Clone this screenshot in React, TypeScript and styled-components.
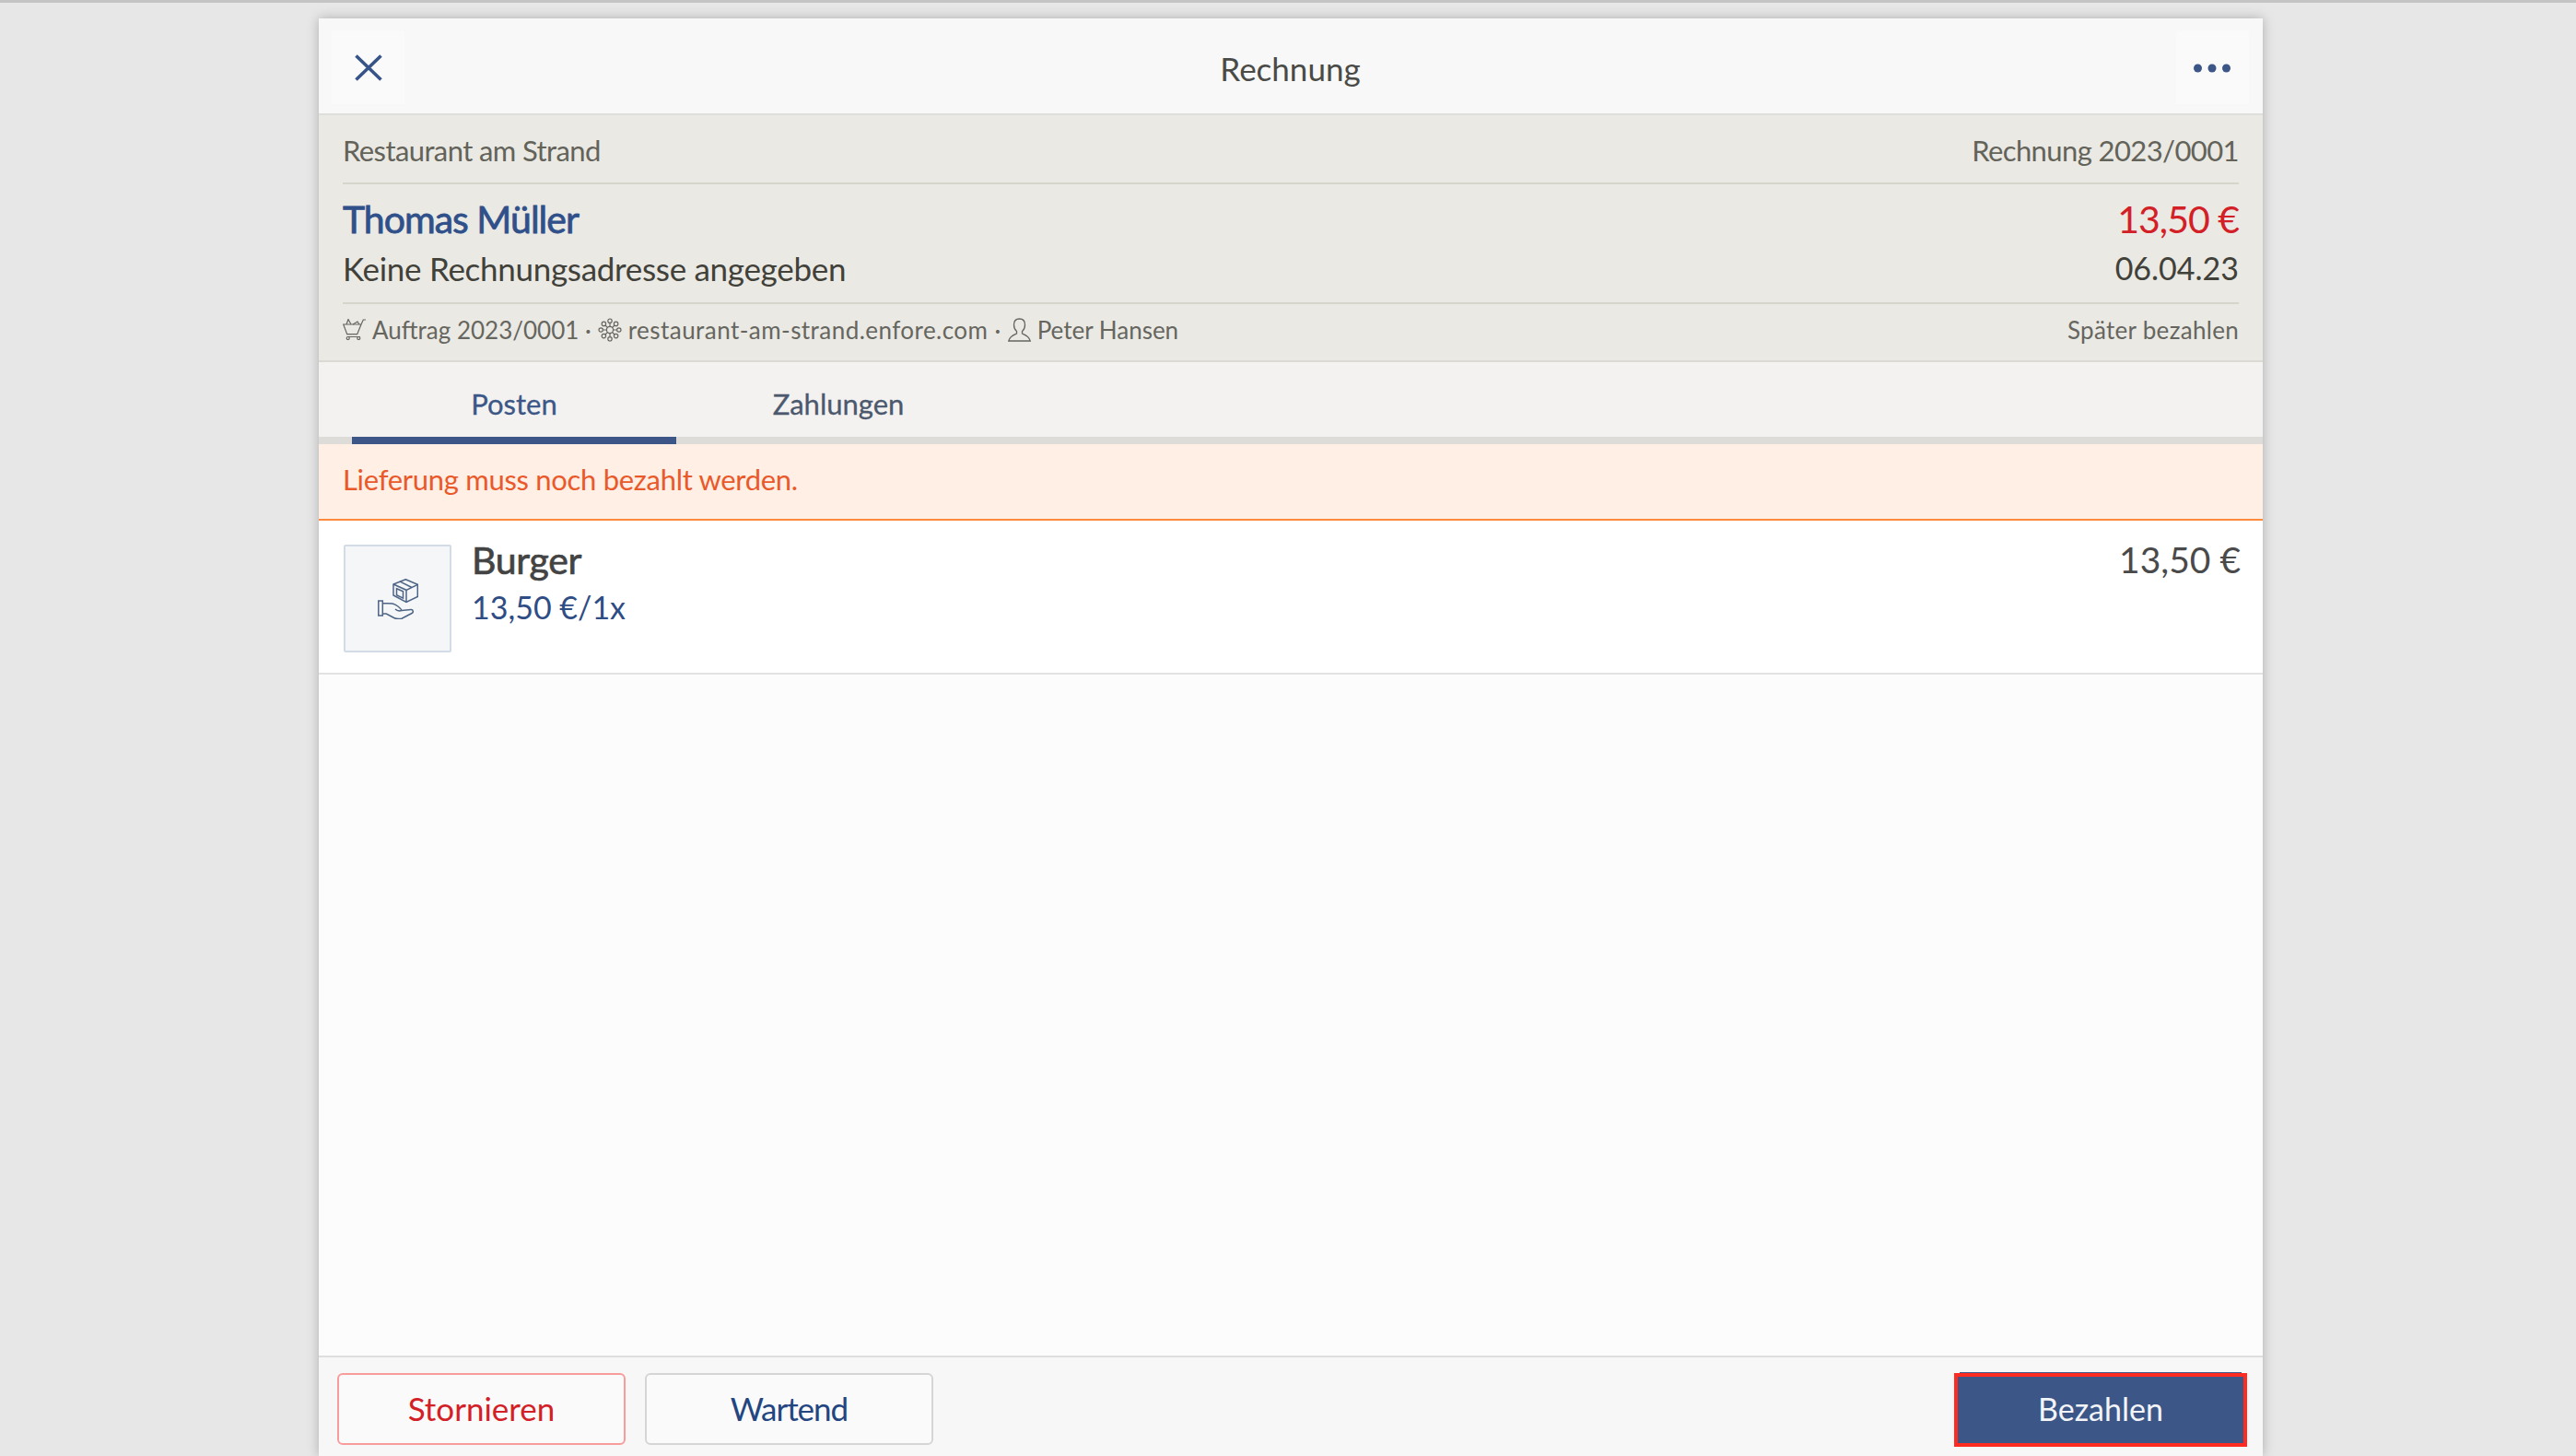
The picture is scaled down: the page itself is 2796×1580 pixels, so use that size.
import React from 'react';
import styled, { createGlobalStyle } from 'styled-components';

const FONT = `"Lato", "Noto Sans", sans-serif`;

const GlobalStyle = createGlobalStyle`
  html, body { margin: 0; padding: 0; height: 100%; background: #e7e7e7; overflow: hidden; }
  #root { height: 100%; }
  * { box-sizing: border-box; }
  body { font-family: ${FONT}; }
`;

const Screen = styled.div`
  height: 1580px;
  border-top: 3px solid #c4c4c4;
  padding: 17px 0 0 346px;
  display: flex;
`;

const Panel = styled.div`
  width: 2110px;
  height: 1560px;
  flex: none;
  display: flex;
  flex-direction: column;
  background: #fcfcfc;
  box-shadow: 0 0 12px rgba(0, 0, 0, 0.25);
`;

const TopBar = styled.header`
  height: 105px;
  flex: none;
  padding: 14px 15px 10px 14px;
  display: flex;
  align-items: flex-start;
  justify-content: space-between;
  background: #f8f8f8;
  border-bottom: 2px solid #dededc;
`;

const IconButton = styled.button`
  width: 79px;
  height: 79px;
  padding: 0;
  border: 0;
  display: flex;
  align-items: center;
  justify-content: center;
  background: #fafafa;
`;

const Title = styled.h1`
  margin: 0;
  padding-top: 17px;
  font-size: 35px;
  line-height: 46px;
  font-weight: 400;
  color: #4a4a46;
`;

const Summary = styled.section`
  flex: none;
  height: 268px;
  padding: 0 26px;
  background: #eae9e4;
  border-bottom: 2px solid #dbdad2;
`;

const SummaryRow = styled.div<{ $height: number; $divider?: boolean; $pad: string }>`
  height: ${({ $height }) => $height}px;
  padding: ${({ $pad }) => $pad};
  display: flex;
  justify-content: space-between;
  align-items: center;
  border-bottom: ${({ $divider }) => ($divider ? '2px solid #d6d5cb' : '0')};
`;

const StackedRow = styled.div`
  height: 130px;
  padding-top: 11px;
  display: grid;
  grid-template-columns: 1fr auto;
  grid-auto-rows: 53px;
  align-items: center;
  border-bottom: 2px solid #d6d5cb;
`;

const MutedText = styled.span`
  font-size: 31px;
  letter-spacing: -0.6px;
  color: #63635a;
`;

const Customer = styled.span`
  font-size: 41px;
  letter-spacing: -1px;
  color: #30508a;
  -webkit-text-stroke: 0.8px #30508a;
`;

const Amount = styled.span`
  font-size: 41px;
  letter-spacing: -1px;
  color: #d32026;
  text-align: right;
`;

const AddressText = styled.span`
  font-size: 35px;
  letter-spacing: -0.3px;
  color: #41413a;
`;

const DateText = styled.span`
  font-size: 34px;
  color: #41413a;
  text-align: right;
`;

const MetaList = styled.div`
  display: flex;
  align-items: center;
  gap: 7px;
  font-size: 26px;
  color: #66665f;
`;

const Domain = styled.span`
  letter-spacing: 0.45px;
`;

const MetaStatus = styled.span`
  font-size: 26px;
  letter-spacing: 0.3px;
  color: #66665f;
`;

const Tabs = styled.nav`
  flex: none;
  height: 89px;
  padding-left: 36px;
  display: flex;
  background: #f3f2f0;
  border-bottom: 8px solid #dddcd8;
`;

const Tab = styled.div<{ $active?: boolean }>`
  width: 352px;
  height: 89px;
  padding-top: 25px;
  text-align: center;
  font-size: 31px;
  line-height: 40px;
  color: ${({ $active }) => ($active ? '#3c5787' : '#4b586e')};
  -webkit-text-stroke: 0.3px currentColor;
  border-bottom: 8px solid ${({ $active }) => ($active ? '#3c5787' : 'transparent')};
`;

const Alert = styled.div`
  flex: none;
  height: 83px;
  padding: 0 26px 6px;
  display: flex;
  align-items: center;
  font-size: 31px;
  letter-spacing: -0.3px;
  color: #e9592a;
  background: #ffefe5;
  border-bottom: 2px solid #ff8a3c;
`;

const ItemRow = styled.div`
  flex: none;
  height: 167px;
  padding: 25px 24px 0 27px;
  display: flex;
  background: #ffffff;
  border-bottom: 2px solid #e2e2e2;
`;

const Thumb = styled.div`
  width: 117px;
  height: 117px;
  flex: none;
  margin: 1px 22px 0 0;
  display: flex;
  align-items: center;
  justify-content: center;
  background: #f4f6f8;
  border: 2px solid #d3dbe6;
  border-radius: 2px;
`;

const ItemBody = styled.div`
  flex: 1;
  display: flex;
  flex-direction: column;
`;

const ItemName = styled.span`
  font-size: 41px;
  line-height: 35px;
  letter-spacing: -0.3px;
  color: #434343;
  -webkit-text-stroke: 0.7px #434343;
`;

const ItemPrice = styled.span`
  margin-top: 9px;
  font-size: 34px;
  line-height: 50px;
  color: #2f4d85;
`;

const ItemTotal = styled.span`
  font-size: 39px;
  line-height: 35px;
  color: #4a4a4a;
`;

const Spacer = styled.div`
  flex: 1;
`;

const Footer = styled.footer`
  flex: none;
  height: 109px;
  padding: 17px 17px 0 20px;
  display: flex;
  gap: 21px;
  background: #f7f7f7;
  border-top: 2px solid #dedede;
`;

const Outlined = styled.button<{ $danger?: boolean }>`
  width: 313px;
  height: 78px;
  padding: 0 0 2px;
  background: #fafafa;
  font-family: ${FONT};
  font-size: 35px;
  letter-spacing: ${({ $danger }) => ($danger ? '0' : '-1px')};
  color: ${({ $danger }) => ($danger ? '#d32026' : '#234580')};
  border: 2px solid ${({ $danger }) => ($danger ? '#f89b9b' : '#d5d5d5')};
  border-radius: 6px;
`;

const PayButton = styled.button`
  width: 310px;
  height: 72px;
  margin: 4px 4px 0 auto;
  padding: 0 0 3px;
  background: #3c5787;
  font-family: ${FONT};
  font-size: 34px;
  color: #f2f4f8;
  border: 0;
  outline: 4px solid #ff2a20;
  box-shadow: 0 -7px 0 -2px #3c5787;
`;

const CloseIcon = () => (
  <svg width="30" height="29" viewBox="0 0 30 29" fill="none" stroke="#375488" strokeWidth="3.6">
    <path d="M1.500 1.500 28.500 27.500M28.500 1.500 1.500 27.500" />
  </svg>
);

const DotsIcon = () => (
  <svg width="40" height="10" viewBox="0 0 40 10" fill="#3c5787">
    <circle cx="4.500" cy="5" r="4.500" />
    <circle cx="20" cy="5" r="4.500" />
    <circle cx="35.500" cy="5" r="4.500" />
  </svg>
);

const CartIcon = () => (
  <svg width="25" height="23" viewBox="0 0 25 23" fill="none" stroke="#66665f" strokeWidth="1.200">
    <path d="M.7 6H20l-4.300 10.700h-11L.7 6zM20 6l2.300-5H25M5 19.500h14" />
    <path d="M4 6l2-5.500L9 6M11 6l5-3 2 3" />
    <circle cx="5.700" cy="21" r="1.500" />
    <circle cx="17.300" cy="21" r="1.500" />
  </svg>
);

const NetworkIcon = () => (
  <svg width="26" height="26" viewBox="0 0 26 26" fill="none" stroke="#66665f" strokeWidth="1.200">
    <circle cx="13" cy="13" r="3.600" />
    <path d="M13 6v3.400M13 16.600V20M6 13h3.400M16.600 13H20M8 8l2.600 2.600M15.400 15.400 18 18M18 8l-2.600 2.600M10.600 15.400 8 18" />
    <circle cx="13" cy="3.200" r="2.200" />
    <circle cx="13" cy="22.800" r="2.200" />
    <circle cx="3.200" cy="13" r="2.200" />
    <circle cx="22.800" cy="13" r="2.200" />
    <circle cx="6.400" cy="6.400" r="2.200" />
    <circle cx="19.600" cy="6.400" r="2.200" />
    <circle cx="6.400" cy="19.600" r="2.200" />
    <circle cx="19.600" cy="19.600" r="2.200" />
  </svg>
);

const PersonIcon = () => (
  <svg width="25" height="26" viewBox="0 0 25 26" fill="none" stroke="#66665f" strokeWidth="1.300">
    <path d="M12.500 1C8.700 1 6.500 3.600 6.500 7.500c0 3 1.200 5.500 3 7v2.500C6.500 18.200 2 19.500.8 25h23.400c-1.200-5.500-5.700-6.800-8.700-8v-2.500c1.800-1.500 3-4 3-7C18.500 3.600 16.300 1 12.500 1z" />
  </svg>
);

const DeliveryIcon = () => (
  <svg width="44" height="44" viewBox="0 0 44 44" fill="none" stroke="#4d6485" strokeWidth="1.500">
    <path d="M30.300.7 17 6v12l14 7.500 12.300-6V6.300z" />
    <path d="M17 6l14 6.300 12.300-6M31 12.300v13.200M23.700 2.800 37 9.500" />
    <path d="M20.500 10.800l7 3v7.300l-7-3.300z" />
    <path d="M.8 24h4.500v16H.8zM5.300 26.500l10.700.5c4 1 8.500 4.500 10 7.500-2.500.8-5 .5-7-1.500M26 34.500l10-1c2.500-.2 3.200 3 1 4l-11 5.700c-3 .8-6 .3-8.300-.7L9.300 38H5.300" />
  </svg>
);

const App = () => (
  <>
    <GlobalStyle />
    <Screen>
      <Panel>
        <TopBar>
          <IconButton><CloseIcon /></IconButton>
          <Title>Rechnung</Title>
          <IconButton><DotsIcon /></IconButton>
        </TopBar>

        <Summary>
          <SummaryRow $height={75} $divider $pad="3px 0 0">
            <MutedText>Restaurant am Strand</MutedText>
            <MutedText>Rechnung 2023/0001</MutedText>
          </SummaryRow>
          <StackedRow>
            <Customer>Thomas Müller</Customer>
            <Amount>13,50 €</Amount>
            <AddressText>Keine Rechnungsadresse angegeben</AddressText>
            <DateText>06.04.23</DateText>
          </StackedRow>
          <SummaryRow $height={60} $pad="0 0 5px">
            <MetaList>
              <CartIcon />
              <span>Auftrag 2023/0001 ·</span>
              <NetworkIcon />
              <Domain>restaurant-am-strand.enfore.com ·</Domain>
              <PersonIcon />
              <span>Peter Hansen</span>
            </MetaList>
            <MetaStatus>Später bezahlen</MetaStatus>
          </SummaryRow>
        </Summary>

        <Tabs>
          <Tab $active>Posten</Tab>
          <Tab>Zahlungen</Tab>
        </Tabs>

        <Alert>Lieferung muss noch bezahlt werden.</Alert>

        <ItemRow>
          <Thumb><DeliveryIcon /></Thumb>
          <ItemBody>
            <ItemName>Burger</ItemName>
            <ItemPrice>13,50 €/1x</ItemPrice>
          </ItemBody>
          <ItemTotal>13,50 €</ItemTotal>
        </ItemRow>

        <Spacer />

        <Footer>
          <Outlined $danger>Stornieren</Outlined>
          <Outlined>Wartend</Outlined>
          <PayButton>Bezahlen</PayButton>
        </Footer>
      </Panel>
    </Screen>
  </>
);

export default App;
